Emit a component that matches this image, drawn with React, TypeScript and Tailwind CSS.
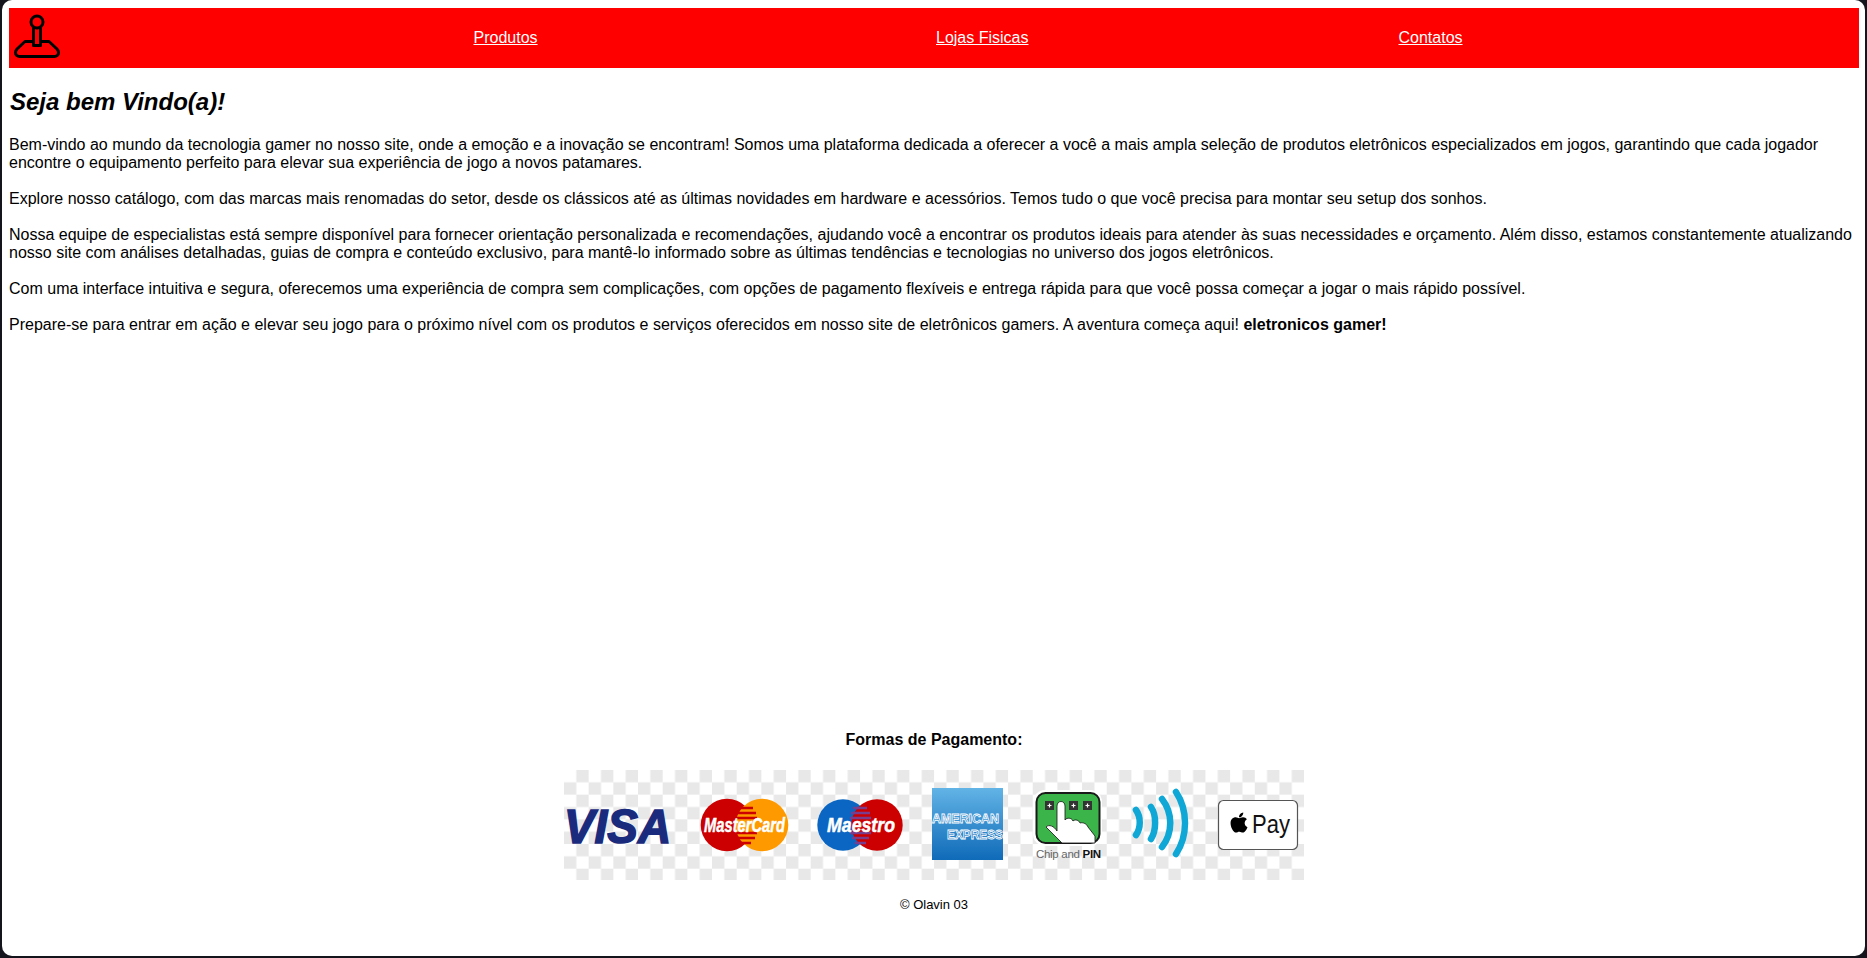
import React from 'react';
import { FaApple } from 'react-icons/fa';

const links = ['Produtos', 'Lojas Fisicas', 'Contatos'];

const Joystick = () => (
  <svg width="50" height="50" viewBox="0 0 50 50" fill="none" stroke="#000" strokeWidth="3" strokeLinecap="round" strokeLinejoin="round">
    <circle cx="25" cy="9" r="6" />
    <path d="M21.5 15v17.5h7V15" />
    <path d="M21 28.5H13L5 36c-1 1-1.5 2-1.5 3.5 0 2.5 2 4 4 4h35c2 0 4-1.5 4-4 0-1.5-.5-2.5-1.5-3.5L37 28.5H29" />
  </svg>
);

const PaymentStrip = () => (
  <svg width="740" height="110" viewBox="0 0 740 110" className="block">
    <defs>
      <pattern id="checker" width="24.67" height="24.67" patternUnits="userSpaceOnUse">
        <rect width="24.67" height="24.67" fill="#fff" />
        <rect x="12.33" width="12.33" height="12.33" fill="#e8e8e8" />
        <rect y="12.33" width="12.33" height="12.33" fill="#e8e8e8" />
      </pattern>
      <linearGradient id="amex" x1="0" y1="0" x2="0" y2="1">
        <stop offset="0" stopColor="#62b4e6" />
        <stop offset="1" stopColor="#0f6ab8" />
      </linearGradient>
    </defs>
    <rect width="740" height="110" fill="url(#checker)" />

    {/* visa */}
    <text x="0" y="73" fontFamily="Liberation Sans" fontWeight="700" fontStyle="italic" fontSize="48" fill="#1a2b7e" stroke="#1a2b7e" strokeWidth="1.6" textLength="107" lengthAdjust="spacingAndGlyphs">VISA</text>

    {/* mastercard */}
    <circle cx="163" cy="55" r="26.3" fill="#cc0000" />
    <circle cx="198" cy="55" r="26.3" fill="#ff9900" />
    <path d="M172 38h17M169 43h23M168 48h25M168 63h25M170 68h21M174 73h13" stroke="#cc0000" strokeWidth="2.5" />
    <text x="140" y="62" fontFamily="Liberation Sans" fontWeight="700" fontStyle="italic" fontSize="20" fill="#fff" stroke="#fff" strokeWidth="0.5" textLength="81" lengthAdjust="spacingAndGlyphs">MasterCard</text>

    {/* maestro */}
    <circle cx="279" cy="55" r="25.7" fill="#0a66c2" />
    <circle cx="313" cy="55" r="25.7" fill="#cc0000" />
    <path d="M289 38h14M287 43h19M286 48h21M286 63h21M288 68h17M291 73h11" stroke="#7a3d8c" strokeWidth="2.5" />
    <text x="263" y="62" fontFamily="Liberation Sans" fontWeight="700" fontStyle="italic" fontSize="20" fill="#fff" stroke="#fff" strokeWidth="0.5" textLength="68" lengthAdjust="spacingAndGlyphs">Maestro</text>

    {/* amex */}
    <rect x="368" y="18" width="71" height="72" fill="url(#amex)" />
    <text x="368" y="53" fontFamily="Liberation Sans" fontWeight="700" fontSize="13" fill="#2f86c9" stroke="#fff" strokeWidth="0.8" textLength="67" lengthAdjust="spacingAndGlyphs">AMERICAN</text>
    <text x="383" y="69" fontFamily="Liberation Sans" fontWeight="700" fontSize="13" fill="#2f7fc4" stroke="#fff" strokeWidth="0.8" textLength="56" lengthAdjust="spacingAndGlyphs">EXPRESS</text>

    {/* chip and pin */}
    <rect x="469" y="20" width="69" height="56" rx="12" fill="#fff" />
    <rect x="472.5" y="23" width="63" height="50" rx="9" fill="#3bb54a" stroke="#1a1a1a" strokeWidth="2" />
    <rect x="481" y="31" width="9" height="9" fill="#333" />
    <rect x="505" y="31" width="9" height="9" fill="#333" />
    <rect x="519" y="31" width="9" height="9" fill="#333" />
    <path d="M483.500 35.5h4M485.500 33.500v4M507.500 35.5h4M509.500 33.500v4M521.500 35.5h4M523.500 33.500v4" stroke="#fff" strokeWidth="1.2" />
    <path d="M482 57c3-3 8-1 11 4V36c0-6 8-6 8 0v14c2-3 7-2 8 1 2-2 6-1 7 2 3-1 7 1 8 4l7 9v7h-33l-16-16z" fill="#fff" stroke="#111" strokeWidth="0.8" strokeLinejoin="round" />
    <text x="472" y="88" fontFamily="Liberation Sans" fontSize="11.5" letterSpacing="-0.3" fill="#666">Chip and <tspan fontWeight="700" fill="#111">PIN</tspan></text>

    {/* contactless */}
    <g fill="none" stroke="#0fa8d6" strokeLinecap="round" strokeWidth="6.5">
      <path d="M572 40C577 47 577 58 572 65" />
      <path d="M587 37C592.500 45 592.500 60 587 69" />
      <path d="M598 29C609 43 609 63 598 77" />
      <path d="M612 22C624 40 624 66 612 84" />
    </g>

    {/* apple pay */}
    <rect x="654.5" y="30.5" width="79" height="49" rx="5" fill="#fff" stroke="#555" strokeWidth="1.2" />
    <FaApple x="663.5" y="41" size={23} color="#000" />
    <text x="688" y="63" fontFamily="Liberation Sans" fontSize="26" fill="#111" textLength="38" lengthAdjust="spacingAndGlyphs">Pay</text>
  </svg>
);

export default function App() {
  return (
    <div className="h-screen bg-[#14141c] font-['Liberation_Sans',Arial,sans-serif] text-black text-base leading-[18px]">
      <div className="h-[956px] bg-white rounded-[10px] pl-[7px] pr-[6px] pt-2 ml-[2px] mr-[2px] flex flex-col">
        <nav className="grid grid-cols-4 h-[60px] bg-[#ff0000] items-center">
          <div className="pl-[3px]">
            <Joystick />
          </div>
          {links.map((l) => (
            <div key={l} className="pl-[2px]">
              <a href="#" className="text-white underline">{l}</a>
            </div>
          ))}
        </nav>

        <main className="flex-1">
          <h2 className="text-2xl font-bold italic leading-[28px] mt-5 mb-5 pl-px">Seja bem Vindo(a)!</h2>
          <p className="mb-[18px]">
            Bem-vindo ao mundo da tecnologia gamer no nosso site, onde a emoção e a inovação se encontram! Somos uma plataforma dedicada a oferecer a você a mais ampla seleção de produtos eletrônicos especializados em jogos, garantindo que cada jogador encontre o equipamento perfeito para elevar sua experiência de jogo a novos patamares.
          </p>
          <p className="mb-[18px]">
            Explore nosso catálogo, com das marcas mais renomadas do setor, desde os clássicos até as últimas novidades em hardware e acessórios. Temos tudo o que você precisa para montar seu setup dos sonhos.
          </p>
          <p className="mb-[18px]">
            Nossa equipe de especialistas está sempre disponível para fornecer orientação personalizada e recomendações, ajudando você a encontrar os produtos ideais para atender às suas necessidades e orçamento. Além disso, estamos constantemente atualizando nosso site com análises detalhadas, guias de compra e conteúdo exclusivo, para mantê-lo informado sobre as últimas tendências e tecnologias no universo dos jogos eletrônicos.
          </p>
          <p className="mb-[18px]">
            Com uma interface intuitiva e segura, oferecemos uma experiência de compra sem complicações, com opções de pagamento flexíveis e entrega rápida para que você possa começar a jogar o mais rápido possível.
          </p>
          <p>
            Prepare-se para entrar em ação e elevar seu jogo para o próximo nível com os produtos e serviços oferecidos em nosso site de eletrônicos gamers. A aventura começa aqui! <strong>eletronicos gamer!</strong>
          </p>
        </main>

        <footer className="flex flex-col items-center pb-[42px]">
          <p className="font-bold mb-[21px]">Formas de Pagamento:</p>
          <PaymentStrip />
          <p className="text-[13px] mt-4">© Olavin 03</p>
        </footer>
      </div>
    </div>
  );
}
